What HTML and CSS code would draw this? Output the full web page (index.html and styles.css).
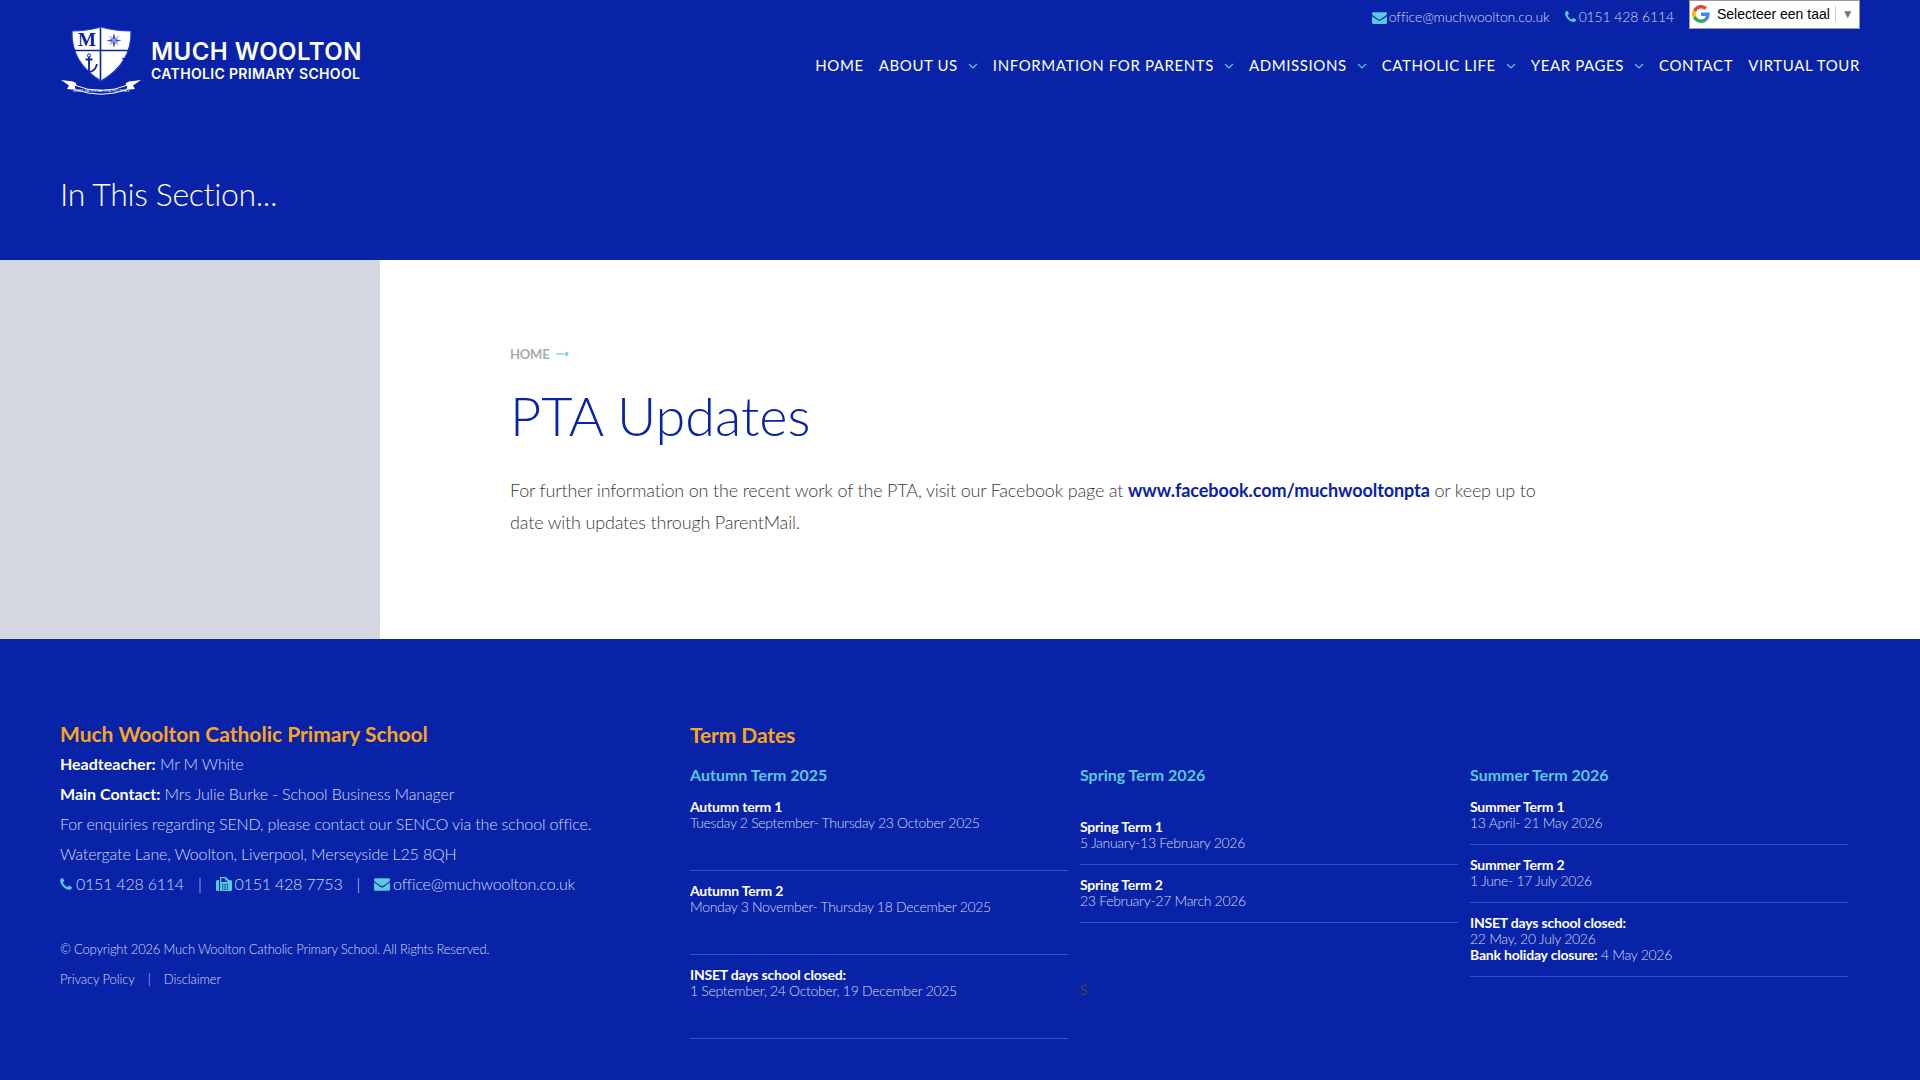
FILE: index.html
```html
<!DOCTYPE html>
<html lang="en">
<head>
<meta charset="utf-8">
<title>PTA Updates - Much Woolton Catholic Primary School</title>
<link rel="stylesheet" href="styles.css">
</head>
<body>
<svg class="defs" width="0" height="0" aria-hidden="true">
  <symbol id="i-env" viewBox="0 0 1792 1792"><path d="M1792 710v794q0 66-47 113t-113 47h-1472q-66 0-113-47t-47-113v-794q44 49 101 87 362 246 497 345 57 42 92.5 65.5t94.5 48 110 24.5h2q51 0 110-24.5t94.5-48 92.5-65.5q170-123 498-345 57-39 100-87zm0-294q0 79-49 151t-122 123q-376 261-468 325-10 7-42.5 30.5t-54 38-52 32.5-57.5 27-50 9h-2q-23 0-50-9t-57.5-27-52-32.5-54-38-42.5-30.5q-91-64-262-182.5t-205-142.5q-62-42-117-115.5t-55-136.5q0-78 41.5-130t118.5-52h1472q65 0 112.5 47t47.5 113z"/></symbol>
  <symbol id="i-phone" viewBox="0 0 1408 1792"><path d="M1408 1240q0 27-10 70.5t-21 68.5q-21 50-122 106-94 51-186 51-27 0-53-3.5t-57.5-12.5-47-14.5-55.5-20.5-49-18q-98-35-175-83-127-79-264-216t-216-264q-48-77-83-175-3-9-18-49t-20.5-55.5-14.5-47-12.5-57.5-3.5-53q0-92 51-186 56-101 106-122 25-11 68.5-21t70.5-10q14 0 21 3 18 6 53 76 11 19 30 54t35 63.5 31 53.5q3 4 17.5 25t21.5 35.5 7 28.5q0 20-28.5 50t-62 55-62 53-28.5 46q0 9 5 22.5t8.5 20.5 14 24 11.5 19q76 137 174 235t235 174q2 1 19 11.5t24 14 20.5 8.5 22.5 5q18 0 46-28.5t53-62 55-62 50-28.5q14 0 28.5 7t35.5 21.5 25 17.5q25 15 53.5 31t63.5 35 54 30q70 35 76 53 3 7 3 21z"/></symbol>
  <symbol id="i-fax" viewBox="0 0 16 16"><path d="M0 5.500Q0 4 1.500 4H3v11H1.500Q0 15 0 13.500zM4 1h6l2.500 2.500V4h2Q16 4 16 5.500v8Q16 15 14.500 15H4zM5.200 2.200V6h6V4.500H9V2.200zM6 8v1.300h1.300V8zm2.300 0v1.300h1.400V8zm2.400 0v1.300H12V8zM6 10.200v1.300h1.300v-1.300zm2.300 0v1.300h1.400v-1.300zm2.400 0v1.300H12v-1.300zM6 12.400v1.300h1.300v-1.300zm2.300 0v1.300h1.400v-1.300zm2.400 0v1.300H12v-1.300z" fill-rule="evenodd"/></symbol>
  <symbol id="i-chev" viewBox="0 0 10 6"><path d="M1 1l4 4 4-4" fill="none" stroke="currentColor" stroke-width="1.200"/></symbol>
</svg>

<header class="hero">
  <div class="topbar">
    <a class="logo" href="#">
      <svg class="crest" width="82" height="70" viewBox="0 0 82 70">
        <path d="M12 5Q27 5 41 1Q55 5 71 5Q72 37 41 55Q11 37 12 5Z" fill="#fff" stroke="#1d3ae6" stroke-width="1.200"/>
        <path d="M40.500 2V54M12 24.500H71" stroke="#0823a7" stroke-width="1.600"/>
        <text x="27" y="20" class="crest-letter">M</text>
        <text x="50" y="43" class="crest-letter crest-w">W</text>
        <path d="M54 7l1.600 5.900L61.500 14.500 55.600 16.100 54 22l-1.600-5.900L46.500 14.500l5.900-1.600z" fill="#3550c8"/>
        <path d="M48.500 9l5.500 4 5.500-4-4 5.500 4 5.500-5.500-4-5.500 4 4-5.500z" fill="#8c9be0"/>
        <path d="M29 31v15M25.500 33.500h7M21 38l1.500 4q3 4 6.500 4t6.500-4L37 38" fill="none" stroke="#0823a7" stroke-width="1.800"/>
        <circle cx="29" cy="29.500" r="1.600" fill="none" stroke="#0823a7" stroke-width="1"/>
        <path d="M1 54l12 1.500 3 1.500 1 6-5 .5-5-.5 2-3.500zM81 54l-12 1.500-3 1.500-1 6 5 .5 5-.5-2-3.500z" fill="#fff"/>
        <path d="M14 59Q41 70 68 59L67 63.500Q41 73 15 63.500z" fill="#0823a7" stroke="#fff" stroke-width="1"/>
        <text x="41" y="66" class="crest-motto">SEDES SAPIENTIAE ORA PRO NOBIS</text>
      </svg>
      <span class="logo-text">
        <strong>MUCH WOOLTON</strong>
        <span>CATHOLIC PRIMARY SCHOOL</span>
      </span>
    </a>
    <div class="top-right">
      <div class="contact-row">
        <a class="tc" href="#"><svg class="ic ic-env"><use href="#i-env"/></svg>office@muchwoolton.co.uk</a>
        <a class="tc" href="#"><svg class="ic ic-ph"><use href="#i-phone"/></svg>0151 428 6114</a>
        <div class="translate">
          <svg width="18" height="18" viewBox="0 0 48 48"><path fill="#EA4335" d="M24 9.500c3.500 0 6.700 1.200 9.200 3.600l6.900-6.900C35.900 2.400 30.500 0 24 0 14.600 0 6.500 5.400 2.600 13.200l8 6.200C12.400 13.700 17.700 9.500 24 9.500z"/><path fill="#4285F4" d="M47 24.500c0-1.600-.1-3.100-.4-4.500H24v9h12.900c-.6 3-2.200 5.500-4.700 7.200l7.700 6C44.400 37.900 47 31.800 47 24.500z"/><path fill="#FBBC05" d="M10.500 28.600C10 27.200 9.800 25.600 9.800 24s.2-3.200.8-4.600l-8-6.200C.9 16.500 0 20.100 0 24s.9 7.500 2.600 10.800z"/><path fill="#34A853" d="M24 48c6.500 0 11.900-2.100 15.900-5.800l-7.700-6c-2.100 1.400-4.900 2.300-8.200 2.300-6.300 0-11.600-4.200-13.500-9.900l-8 6.200C6.500 42.600 14.600 48 24 48z"/></svg>
          <span class="tr-label">Selecteer een taal</span>
          <span class="tr-caret">▼</span>
        </div>
      </div>
      <nav class="nav">
        <a href="#">Home</a>
        <a href="#">About Us<svg class="chev"><use href="#i-chev"/></svg></a>
        <a href="#">Information for Parents<svg class="chev"><use href="#i-chev"/></svg></a>
        <a href="#">Admissions<svg class="chev"><use href="#i-chev"/></svg></a>
        <a href="#">Catholic Life<svg class="chev"><use href="#i-chev"/></svg></a>
        <a href="#">Year Pages<svg class="chev"><use href="#i-chev"/></svg></a>
        <a href="#">Contact</a>
        <a href="#">Virtual Tour</a>
      </nav>
    </div>
  </div>
  <h2 class="section-title">In This Section...</h2>
</header>

<section class="page">
  <aside class="side"></aside>
  <main class="content">
    <div class="crumb"><a href="#">HOME</a><svg width="13" height="6" viewBox="0 0 13 6"><path d="M0 3h12M10 1l2 2-2 2" fill="none" stroke="#5bc8de" stroke-width="1.200"/></svg></div>
    <h1>PTA Updates</h1>
    <p>For further information on the recent work of the PTA, visit our Facebook page at <a href="#">www.facebook.com/muchwooltonpta</a> or keep up to date with updates through ParentMail.</p>
  </main>
</section>

<footer class="footer">
  <div class="f-left">
    <h3 class="f-school">Much Woolton Catholic Primary School</h3>
    <p><b>Headteacher:</b> Mr M White</p>
    <p><b>Main Contact:</b> Mrs Julie Burke - School Business Manager</p>
    <p>For enquiries regarding SEND, please contact our SENCO via the school office.</p>
    <p>Watergate Lane, Woolton, Liverpool, Merseyside L25 8QH</p>
    <p class="f-contacts">
      <svg class="ic fi-ph"><use href="#i-phone"/></svg>0151 428 6114<span class="sep">|</span><svg class="ic fi-fax"><use href="#i-fax"/></svg>0151 428 7753<span class="sep">|</span><svg class="ic fi-env"><use href="#i-env"/></svg>office@muchwoolton.co.uk
    </p>
    <p class="f-copy">© Copyright 2026 Much Woolton Catholic Primary School. All Rights Reserved.</p>
    <p class="f-links"><a href="#">Privacy Policy</a><span class="sep">|</span><a href="#">Disclaimer</a></p>
  </div>
  <div class="f-right">
    <h3 class="f-terms">Term Dates</h3>
    <div class="terms">
      <div class="term">
        <h4>Autumn Term 2025</h4>
        <div class="item tall"><b>Autumn term 1</b><br>Tuesday 2 September- Thursday 23 October 2025</div>
        <div class="item tall"><b>Autumn Term 2</b><br>Monday 3 November- Thursday 18 December 2025</div>
        <div class="item tall"><b>INSET days school closed:</b><br>1 September, 24 October, 19 December 2025</div>
      </div>
      <div class="term">
        <h4>Spring Term 2026</h4>
        <div class="item first-gap"><b>Spring Term 1</b><br>5 January-13 February 2026</div>
        <div class="item"><b>Spring Term 2</b><br>23 February-27 March 2026</div>
        <div class="stray">S</div>
      </div>
      <div class="term">
        <h4>Summer Term 2026</h4>
        <div class="item"><b>Summer Term 1</b><br>13 April- 21 May 2026</div>
        <div class="item"><b>Summer Term 2</b><br>1 June- 17 July 2026</div>
        <div class="item"><b>INSET days school closed:</b><br>22 May, 20 July 2026<br><b>Bank holiday closure:</b> 4 May 2026</div>
      </div>
    </div>
  </div>
</footer>
</body>
</html>
```

FILE: styles.css
```css
* { box-sizing: border-box; }
html, body { margin: 0; padding: 0; }
body { font-family: "Lato", "Liberation Sans", sans-serif; font-weight: 300; color: #444; background: #0823a7; height: 1080px; overflow: hidden; }
a { color: inherit; text-decoration: none; }
.defs { display: block; height: 0; }
.ic { fill: #5bc8de; display: inline-block; }

.hero { background: #0823a7; height: 260px; padding: 0 60px; color: #fff; }
.topbar { display: flex; justify-content: space-between; align-items: flex-start; height: 165px; }
.logo { display: flex; align-items: center; gap: 9px; margin-top: 26px; }
.crest { display: block; }
.crest-letter { font-family: "Liberation Serif", serif; font-weight: 700; font-size: 19px; text-anchor: middle; fill: #0823a7; }
.crest-w { font-size: 17px; transform: translateX(20px); }
.crest-motto { font-family: "Liberation Sans", sans-serif; font-size: 3.200px; text-anchor: middle; fill: #fff; }
.logo-text { display: flex; flex-direction: column; color: #fff; font-family: "Inter", "Lato", sans-serif; margin-top: -1px; }
.logo-text strong { font-size: 24px; font-weight: 600; line-height: 26px; letter-spacing: .45px; }
.logo-text span { font-size: 14px; font-weight: 600; line-height: 17px; letter-spacing: .33px; }

.top-right { display: flex; flex-direction: column; align-items: flex-end; }
.contact-row { display: flex; align-items: flex-start; height: 29px; }
.tc { font-size: 14px; color: #d5daf2; line-height: 34px; margin-right: 15px; display: flex; align-items: center; letter-spacing: -.12px; }
.ic-env { width: 15px; height: 15px; margin-right: 2px; }
.ic-ph { width: 11px; height: 14px; margin-right: 3px; }
.translate { width: 171px; height: 29px; background: #fff; border: 1px solid #9a9a9a; display: flex; align-items: center; padding: 0 2px 2px; color: #000; font-family: "Liberation Sans", sans-serif; font-weight: 400; font-size: 14px; }
.tr-label { margin-left: 7px; padding-right: 5px; border-right: 1px solid #ccc; line-height: 16px; }
.tr-caret { margin-left: 6px; color: #777; font-size: 12px; }

.nav { display: flex; gap: 15px; margin-top: 23px; font-size: 15px; font-weight: 400; letter-spacing: .6px; text-transform: uppercase; color: #fff; line-height: 26px; }
.nav a { display: flex; align-items: center; }
.chev { width: 10px; height: 6px; margin-left: 10px; margin-top: 2px; color: #5bc8de; }

.section-title { margin: 0; font-size: 32px; font-weight: 300; line-height: 58px; color: #fff; letter-spacing: -.35px; }

.page { display: flex; height: 379px; background: #fff; }
.side { width: 380px; background: #d5d7e2; }
.content { flex: 1; padding: 84px 0 0 130px; }
.crumb { display: flex; align-items: center; gap: 7px; font-size: 13px; font-weight: 700; color: #aaa; line-height: 20px; letter-spacing: -.2px; }
.content h1 { margin: 20px 0 0; font-size: 54px; font-weight: 300; line-height: 64px; color: #0823a7; }
.content p { margin: 26px 0 0; width: 1030px; font-size: 18px; line-height: 32px; color: #3a3a3a; letter-spacing: -.18px; }
.content p a { color: #0823a7; font-weight: 700; letter-spacing: -.07px; }

.footer { height: 441px; padding: 0 72px 0 60px; display: flex; background: #0823a7; color: #d5daf2; }
.f-left { width: 630px; padding-top: 79px; }
.f-left h3, .f-right h3 { margin: 0; color: #f9a51f; font-weight: 700; line-height: 32px; }
.f-school { font-size: 21px; }
.f-left .f-school { margin-bottom: -1px; }
.f-terms { font-size: 21px; letter-spacing: -.1px; }
.f-left p { margin: 0; font-size: 16px; line-height: 30px; letter-spacing: -.14px; }
.f-left p b, .item b { font-weight: 700; color: #fff; letter-spacing: 0; }
.f-left .f-contacts { display: flex; align-items: center; letter-spacing: -.22px; }
.sep { margin: 0 14px; }
.fi-ph { width: 12px; height: 15px; margin-right: 4px; }
.fi-fax { width: 16px; height: 16px; margin-right: 3px; }
.fi-env { width: 16px; height: 16px; margin-right: 3px; }
.f-left .f-copy { margin-top: 35px; font-size: 13px; letter-spacing: -.19px; }
.f-left .f-links { font-size: 13px; letter-spacing: -.1px; }
.f-links .sep { margin: 0 13px; }
.f-right { flex: 1; padding-top: 80px; }
.terms { display: grid; grid-template-columns: repeat(3, 378px); gap: 12px; margin-top: 12px; }
.term h4 { margin: 0 0 1px; font-size: 16px; line-height: 23px; font-weight: 700; color: #5bc8de; }
.item { padding: 12px 0 13px; border-bottom: 1px solid #3a50bb; font-size: 14px; line-height: 16px; letter-spacing: -.3px; }
.item b { letter-spacing: -.2px; }
.item.tall { padding-bottom: 39px; }
.item.first-gap { margin-top: 21px; }
.stray { font-size: 14px; font-weight: 400; line-height: 16px; color: #444; margin-top: 59px; }
```
